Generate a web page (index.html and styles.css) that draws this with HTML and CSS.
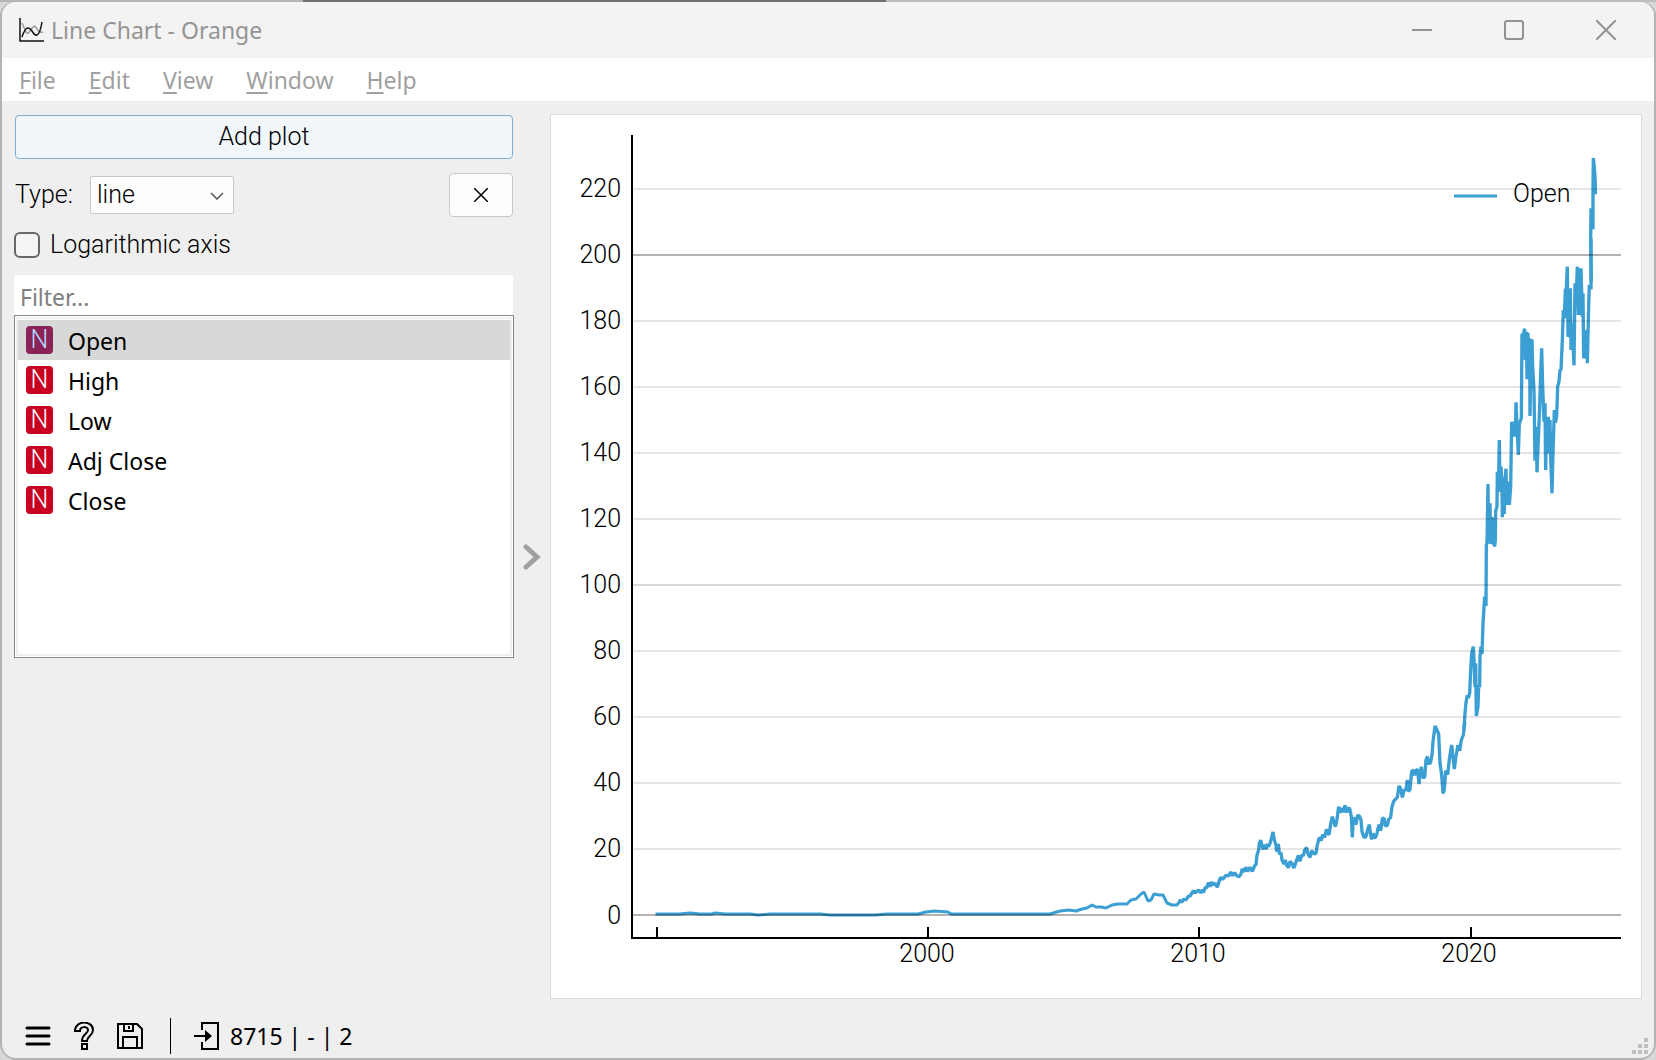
FILE: index.html
```html
<!DOCTYPE html>
<html lang="en">
<head>
    <meta charset="UTF-8"/>
    <meta name="viewport" content="width=device-width, initial-scale=1.0"/>
    <title>Line Chart - Orange</title>
    <link rel="stylesheet" href="styles.css">
</head>
<body>
<div class="window">
    <header class="titlebar">
        <svg class="app-icon" width="26" height="26" viewBox="0 0 26 26" fill="none">
            <path d="M4 6 L8 15 Q10 18 12 14 L15 10 Q17 8 19 12 Q21 16 25 15" stroke="#999" stroke-width="1.5"/>
            <path d="M4 20 Q7 11 10 11 Q12 11 14 14 Q17 19 19 18 Q22 17 24 5" stroke="#111" stroke-width="1.5"/>
            <path d="M2 1 V24 H26" stroke="#111" stroke-width="1.5"/>
        </svg>
        <h1>Line Chart - Orange</h1>
        <div class="window-buttons">
            <button aria-label="Minimize"><svg width="20" height="20" viewBox="0 0 20 20"><path d="M0 10 H20"/></svg></button>
            <button aria-label="Maximize"><svg width="20" height="20" viewBox="0 0 20 20"><rect x="1" y="1" width="18" height="18" rx="2"/></svg></button>
            <button aria-label="Close"><svg width="20" height="20" viewBox="0 0 20 20"><path d="M0 0 L20 20 M20 0 L0 20"/></svg></button>
        </div>
    </header>

    <nav class="menubar">
        <a href="#"><u>F</u>ile</a>
        <a href="#"><u>E</u>dit</a>
        <a href="#"><u>V</u>iew</a>
        <a href="#"><u>W</u>indow</a>
        <a href="#"><u>H</u>elp</a>
    </nav>

    <main class="content">
        <section class="controls">
            <button class="btn add-plot">Add plot</button>
            <div class="type-row">
                <label for="type">Type:</label>
                <div class="combo">
                    <select id="type">
                        <option>line</option>
                        <option>step line</option>
                        <option>column</option>
                        <option>area</option>
                    </select>
                    <svg class="combo-arrow" width="14" height="8" viewBox="0 0 14 8"><path d="M1 1 L7 7 L13 1"/></svg>
                </div>
                <button class="btn remove-plot" aria-label="Remove plot">
                    <svg width="14" height="14" viewBox="0 0 14 14"><path d="M0 0 L14 14 M14 0 L0 14"/></svg>
                </button>
            </div>
            <div class="check-row">
                <input type="checkbox" id="log">
                <label for="log">Logarithmic axis</label>
            </div>
            <input class="filter" type="text" placeholder="Filter..." aria-label="Filter">
            <ul class="variables">
                <li class="selected"><span class="badge">N</span>Open</li>
                <li><span class="badge">N</span>High</li>
                <li><span class="badge">N</span>Low</li>
                <li><span class="badge">N</span>Adj Close</li>
                <li><span class="badge">N</span>Close</li>
            </ul>
        </section>

        <button class="splitter" aria-label="Toggle controls">
            <svg width="18" height="26" viewBox="0 0 18 26"><path d="M3 3 L14 13 L3 23"/></svg>
        </button>

        <section class="plot">
            <svg viewBox="551 115 1090 883">
                <!-- series -->
                <g class="series">
                    <polyline class="line" points="657,914 680,914 690,913 700,914 712,914 715,913 725,914 750,914 758,915 770,914 820,914 830,915 875,915 887,914 918,914 926,912 934,911 948,912 951,914 1050,914 1060,911 1069,910 1076,911 1082,909 1087,908 1092,905 1096,907 1101,907 1106,908 1112,905 1118,904 1127,904 1131,900 1136,899 1141,894 1144,892 1148,901 1151,900 1154,894 1159,895 1163,895 1167,903 1172,905 1177,905 1180,901"/>
                    <polyline class="line x3" transform="translate(1180 720) scale(0.33333)" points="0,543 6,546 10,538 18,540 24,530 30,528 40,513 46,518 56,510 62,518 68,510 70,518 76,502 80,504 85,488 90,500 95,486 100,495 106,490 112,502 118,482 122,472 128,478 138,466 146,468 152,456 158,467 164,458 170,467 177,470 183,462 187,446 192,456 197,442 203,454 210,442 217,454 224,437 228,434 231,405 236,390 238,370 242,360 246,378 250,388 254,374 258,388 262,372 266,380 270,370 274,356 279,336 283,360 288,375 290,395 295,372 298,402 303,398 306,420 312,432 316,420 320,436 326,443 330,424 336,430 342,444 348,426 355,406 360,424 366,404 370,408 374,390 380,383 384,402 390,412 395,392 402,402 408,400 412,375 418,352 424,362 428,344 434,352 439,328 443,340 447,344 452,312 457,290 461,304 466,320 471,298 476,260 480,278 485,264 490,276 495,256 500,278 504,264 509,266 514,290 517,352 520,293 524,300 528,314 532,288 537,286 543,300 546,335 552,352 558,350 563,328 568,314 572,345 575,358 579,340 584,355 590,345 594,325 598,314 602,332 607,296 612,294 616,318 622,316 626,298 632,292 636,260 641,244 646,238 652,232 657,198 662,206 667,232 672,212 678,208 682,180 685,214 690,208 695,154 700,150 704,166 708,152 713,148 717,192 720,164 724,140 728,172 734,172 738,120 742,110 746,130 751,130 756,105 759,65 765,18 770,28 776,42 780,130 785,165 789,220 793,210 797,152 803,164 808,118 815,75 818,104 823,147 828,108 834,75 839,92 844,60 850,45 854,10"/>
                    <polyline class="line x3" transform="translate(1400 240) scale(0.33333)" points="192,1464 195,1420 198,1388 202,1366 205,1374 209,1360 212,1290 215,1240 220,1220 222,1260 225,1340 227,1270 229,1428 234,1400 236,1335 239,1342 240,1250 243,1220 246,1242 249,1150 254,1070 258,1098 259,915 261,908 264,732 266,910 270,790 272,912 274,834 277,835 279,914 283,834 284,920 286,900 287,812 291,800 292,695 295,755 298,600 300,755 303,680 306,740 307,832 309,710 313,822 315,720 318,686 320,795 324,725 328,795 332,740 335,545 339,590 343,545 346,590 348,487 351,560 355,645 358,550 364,535 366,282 370,285 374,266 376,360 379,275 381,418 384,278 386,415 389,295 390,528 393,350 396,298 398,380 402,450 405,662 409,560 411,697 415,600 419,500 421,430 425,325 428,440 432,545 435,490 437,690 440,530 442,635 445,530 447,640 450,540 452,650 456,760 459,640 463,510 466,548 470,530 473,440 477,425 480,390 483,390 487,300 490,210 493,235 496,150 499,145 502,80 504,290 507,145 508,292 511,145 513,330 517,250 520,330 522,376 525,130 528,195 532,80 535,225 538,85 541,225 543,85 547,230 549,160 551,355 555,270 558,355 560,285 562,370 566,200 568,135 573,148 573,0"/>
                    <polyline class="line x3" transform="translate(1350) scale(0.33333)" points="724,840 722,720 723,625 729,688 729,560 730,474 734,515 736,552 736,578"/>
                </g>

                <!-- grid -->
                <g class="grid">
                    <path d="M633 189H1621M633 321H1621M633 387H1621M633 453H1621M633 519H1621M633 651H1621M633 717H1621M633 783H1621M633 849H1621"/>
                    <path class="grid-mid" d="M633 585H1621"/>
                    <path class="grid-major" d="M633 255H1621M633 915H1621"/>
                </g>

                <!-- axes -->
                <path class="axis" d="M632 135V938H1621M657 927V938M928 927V938M1199 927V938M1471 927V938"/>
                <g class="y-labels">
                    <text x="621" y="197">220</text>
                    <text x="621" y="263">200</text>
                    <text x="621" y="329">180</text>
                    <text x="621" y="395">160</text>
                    <text x="621" y="461">140</text>
                    <text x="621" y="527">120</text>
                    <text x="621" y="593">100</text>
                    <text x="621" y="659">80</text>
                    <text x="621" y="725">60</text>
                    <text x="621" y="791">40</text>
                    <text x="621" y="857">20</text>
                    <text x="621" y="924">0</text>
                </g>
                <g class="x-labels">
                    <text x="927" y="962">2000</text>
                    <text x="1198" y="962">2010</text>
                    <text x="1469" y="962">2020</text>
                </g>

                <!-- legend -->
                <path class="line legend-line" d="M1454 196H1497"/>
                <text x="1513" y="202">Open</text>
            </svg>
        </section>
    </main>

    <footer class="statusbar">
        <button aria-label="Menu"><svg width="26" height="28" viewBox="0 0 26 28"><path d="M2 6H24M2 14H24M2 22H24" stroke-width="3" stroke-linecap="round"/></svg></button>
        <button aria-label="Help"><svg width="20" height="28" viewBox="0 0 20 28"><path d="M1 9 C1 -2 19 -2 19 8 C19 14 13 14 13 19 H8 C8 12 14 12 14 8 C14 4 6 4 6 9 Z M8 22 H13 V27 H8 Z" stroke-width="2"/></svg></button>
        <button aria-label="Save"><svg width="26" height="28" viewBox="0 0 26 28"><path d="M1 2 H20 L25 7 V26 H1 Z M7 2 V9 H16 V2 M12 4 V7 M6 26 V15 H20 V26" stroke-width="2"/></svg></button>
        <span class="divider"></span>
        <button class="input-info">
            <svg width="28" height="30" viewBox="0 0 28 30"><path d="M9 9 V2 H25 V28 H9 V21 M1 15 H12" stroke-width="2"/><path d="M12 9 L19 15 L12 21 Z" fill="#000" stroke="none"/></svg>
            8715 | - | 2
        </button>
        <svg class="size-grip" width="16" height="16" viewBox="0 0 16 16"><path d="M12 0h4v4h-4zM6 6h4v4H6zM12 6h4v4h-4zM0 12h4v4H0zM6 12h4v4H6zM12 12h4v4h-4z"/></svg>
    </footer>
</div>
</body>
</html>
```
FILE: styles.css
```css
* {
    box-sizing: border-box;
    margin: 0;
    padding: 0;
}

body {
    min-height: 100vh;
    display: flex;
    padding: 2px;
    background: linear-gradient(to right, #b4b4b4 303px, #706f6f 303px, #706f6f 886px, #bdbdbd 886px) top / 100% 2px no-repeat, #d8d8d8;
    font-family: "Noto Sans", "Open Sans", sans-serif;
    font-size: 23px;
    line-height: 32px;
    color: #000;
}

button {
    border: none;
    background: none;
    font: inherit;
    color: inherit;
}

button svg {
    display: block;
    fill: none;
    stroke: #000;
}

.window {
    flex: 1;
    display: flex;
    flex-direction: column;
    overflow: hidden;
    border-radius: 14px;
    background-color: #efefef;
    box-shadow: -2px 0 0 #b4b4b4, 2px 0 0 #b4b4b4, 0 2px 0 #b4b4b4;
}

/* Title bar */
.titlebar {
    display: flex;
    align-items: center;
    height: 56px;
    padding: 0 12px 0 16px;
    background-color: #f3f3f3;
}

.titlebar h1 {
    margin-left: 7px;
    font-size: 23px;
    font-weight: 400;
    color: #959595;
}

.window-buttons {
    display: flex;
    margin-left: auto;
}

.window-buttons button {
    width: 72px;
    height: 54px;
    margin-left: 20px;
    display: flex;
    align-items: center;
    justify-content: center;
}

.window-buttons svg {
    stroke: #929292;
    stroke-width: 2;
}

/* Menu */
.menubar {
    display: flex;
    gap: 33px;
    height: 43px;
    padding: 6px 17px 0;
    background-color: #fff;
}

.menubar a {
    color: #a0a0a0;
    text-decoration: none;
}

.menubar u {
    text-decoration-thickness: 2px;
    text-underline-offset: 3px;
}

/* Content */
.content {
    flex: 1;
    display: flex;
    padding: 13px 12px 0;
}

.controls {
    flex: none;
    width: 500px;
    padding-top: 1px;
    font-family: Roboto, "Liberation Sans", sans-serif;
    font-size: 25px;
    font-weight: 300;
}

.btn {
    height: 44px;
    border: 1px solid #c8c8c8;
    border-radius: 4px;
    background-color: #fdfdfd;
}

.add-plot {
    display: block;
    width: 498px;
    margin-left: 1px;
    border-color: #7fadd2;
    background-color: #f1f6fb;
}

.type-row {
    display: flex;
    align-items: center;
    margin: 14px 1px 0;
}

.combo {
    position: relative;
    margin-left: 17px;
}

.combo select {
    display: block;
    width: 144px;
    height: 38px;
    padding: 0 6px;
    border: 1px solid #c8c8c8;
    border-radius: 2px;
    background-color: #fdfdfd;
    color: #000;
    font: inherit;
    appearance: none;
}

.combo-arrow {
    position: absolute;
    right: 10px;
    top: 16px;
    fill: none;
    stroke: #555;
    stroke-width: 1.5;
}

.remove-plot {
    width: 64px;
    margin-left: auto;
    display: flex;
    align-items: center;
    justify-content: center;
}

.remove-plot svg {
    stroke-width: 1.5;
}

.check-row {
    display: flex;
    align-items: center;
    height: 32px;
    margin-top: 12px;
}

.check-row input {
    width: 26px;
    height: 26px;
    margin-right: 10px;
    border: 2px solid #686868;
    border-radius: 6px;
    background-color: #f5f5f5;
    appearance: none;
}

.filter {
    display: block;
    width: 499px;
    height: 40px;
    margin-top: 14px;
    padding: 4px 6px 0;
    border: none;
    background-color: #fff;
    font-family: "Noto Sans", "Open Sans", sans-serif;
    font-size: 23px;
}

.filter::placeholder {
    color: #808080;
}

.variables {
    height: 343px;
    padding: 4px 3px;
    border: 1px solid #828790;
    background-color: #fff;
    box-shadow: inset 0 0 0 1px #fff, inset 0 0 0 3px #efefef;
    font-family: "Noto Sans", "Open Sans", sans-serif;
    font-size: 23px;
    font-weight: 400;
    list-style: none;
}

.variables li {
    display: flex;
    align-items: center;
    height: 40px;
    padding: 2px 8px 0;
}

.variables .selected {
    background-color: #d8d8d8;
}

.badge {
    width: 27px;
    height: 28px;
    margin: 0 15px 2px 0;
    border-radius: 4px;
    background-color: #c9001f;
    color: #fff;
    font-family: Roboto, sans-serif;
    font-size: 25px;
    font-weight: 300;
    line-height: 28px;
    text-align: center;
}

.selected .badge {
    background-color: #8b2358;
    color: #b5dcff;
}

.splitter {
    flex: none;
    width: 36px;
    display: flex;
    align-items: center;
    justify-content: center;
}

.splitter svg {
    stroke: #a0a0a0;
    stroke-width: 5;
    stroke-linecap: round;
}

.plot {
    flex: 1;
    min-width: 0;
    display: flex;
    border: 1px solid #dadada;
    background-color: #fff;
}

.plot > svg {
    flex: 1;
    min-width: 0;
    font-family: Roboto, "Liberation Sans", sans-serif;
    font-size: 25px;
    font-weight: 300;
}

.line {
    fill: none;
    stroke: #3b9fd3;
    stroke-width: 3;
    stroke-linejoin: bevel;
    stroke-linecap: square;
}

.x3 {
    stroke-width: 10;
}

.legend-line {
    stroke-linecap: butt;
}

.grid path {
    stroke: #000;
    stroke-opacity: 0.1;
    stroke-width: 2;
}

.grid .grid-mid {
    stroke-opacity: 0.15;
}

.grid .grid-major {
    stroke-opacity: 0.3;
}

.axis {
    fill: none;
    stroke: #000;
    stroke-width: 2;
}

.y-labels {
    text-anchor: end;
}

.x-labels {
    text-anchor: middle;
}

/* Status bar */
.statusbar {
    display: flex;
    align-items: center;
    height: 59px;
    padding: 15px 6px 0 23px;
}

.statusbar button {
    margin-right: 23px;
}

.divider {
    width: 1px;
    height: 36px;
    margin: 0 22px 0 4px;
    background-color: #000;
}

.statusbar .input-info {
    display: flex;
    align-items: center;
    gap: 9px;
}

.size-grip {
    align-self: flex-end;
    margin: 0 0 4px auto;
    fill: #c0c0c0;
}
```
